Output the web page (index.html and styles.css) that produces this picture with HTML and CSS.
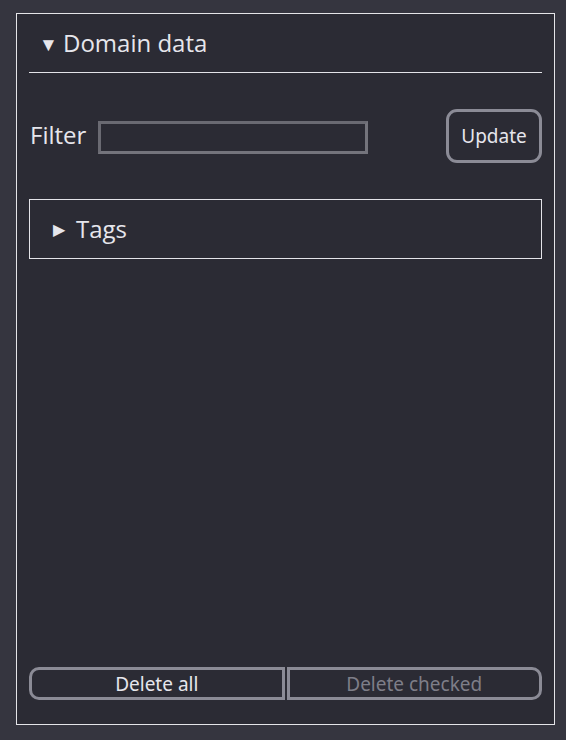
FILE: index.html
```html
<!DOCTYPE html>
<html lang="en">
<head>
<meta charset="utf-8">
<title>Domain data</title>
<link rel="stylesheet" href="styles.css">
</head>
<body>
  <div class="panel">
    <div class="header">
      <span class="tri-down">▼</span>
      <span class="title">Domain data</span>
    </div>
    <div class="filter-row">
      <label class="filter-label" for="filter">Filter</label>
      <input id="filter" class="filter-input" type="text">
      <button class="update-btn">Update</button>
    </div>
    <div class="tags">
      <span class="tri-right">▶</span>
      <span class="tags-label">Tags</span>
    </div>
    <div class="spacer"></div>
    <div class="actions">
      <button class="act act-left">Delete all</button>
      <button class="act act-right" disabled>Delete checked</button>
    </div>
  </div>
</body>
</html>
```

FILE: styles.css
```css
html, body {
  margin: 0;
  padding: 0;
}
body {
  background: #35353f;
  padding: 13px 11px 0 16px;
  font-family: "Open Sans", "Noto Sans", sans-serif;
  color: #e6e6ec;
}
.panel {
  box-sizing: border-box;
  width: 539px;
  height: 712px;
  border: 1px solid #e4e4e8;
  background: #2b2b34;
  padding: 0 12px 24px 12px;
  display: flex;
  flex-direction: column;
}
.header {
  height: 58px;
  border-bottom: 1px solid #e4e4e8;
  display: flex;
  align-items: center;
  padding-left: 10px;
}
.tri-down {
  font-size: 19px;
  width: 24px;
  line-height: 1;
  position: relative;
  top: 1px;
}
.title {
  font-size: 24px;
  line-height: 1;
}
.filter-row {
  margin-top: 36px;
  display: flex;
  align-items: center;
  height: 54px;
}
.filter-label {
  font-size: 24px;
  padding-left: 1px;
  margin-right: 12px;
  position: relative;
  top: -2px;
}
.filter-input {
  box-sizing: border-box;
  width: 270px;
  height: 33px;
  background: #2b2b34;
  border: 3px solid #74747c;
  border-top-color: #6a6a72;
  border-left-color: #6a6a72;
  margin: 0;
  position: relative;
  top: 1px;
}
.update-btn {
  margin-left: auto;
  box-sizing: border-box;
  width: 96px;
  height: 54px;
  border: 3px solid #8b8b96;
  border-radius: 11px;
  background: #2b2b34;
  color: #e6e6ec;
  font-family: "Noto Sans", "Open Sans", sans-serif;
  font-size: 19px;
  padding: 0;
}
.tags {
  margin-top: 36px;
  box-sizing: border-box;
  height: 60px;
  border: 1px solid #e4e4e8;
  display: flex;
  align-items: center;
  padding-left: 23px;
}
.tri-right {
  font-size: 16px;
  width: 23px;
  line-height: 1;
}
.tags-label {
  font-size: 24px;
  line-height: 1;
}
.spacer {
  flex: 1;
}
.actions {
  display: flex;
  gap: 2px;
  height: 33px;
}
.act {
  box-sizing: border-box;
  flex: 1;
  height: 33px;
  border: 3px solid #8b8b96;
  background: #2b2b34;
  color: #e6e6ec;
  font-family: "Noto Sans", "Open Sans", sans-serif;
  font-size: 19px;
  padding: 0;
  margin: 0;
}
.act-left {
  border-radius: 10px 0 0 10px;
}
.act-right {
  border-radius: 0 10px 10px 0;
  color: #7e7e88;
}
```
